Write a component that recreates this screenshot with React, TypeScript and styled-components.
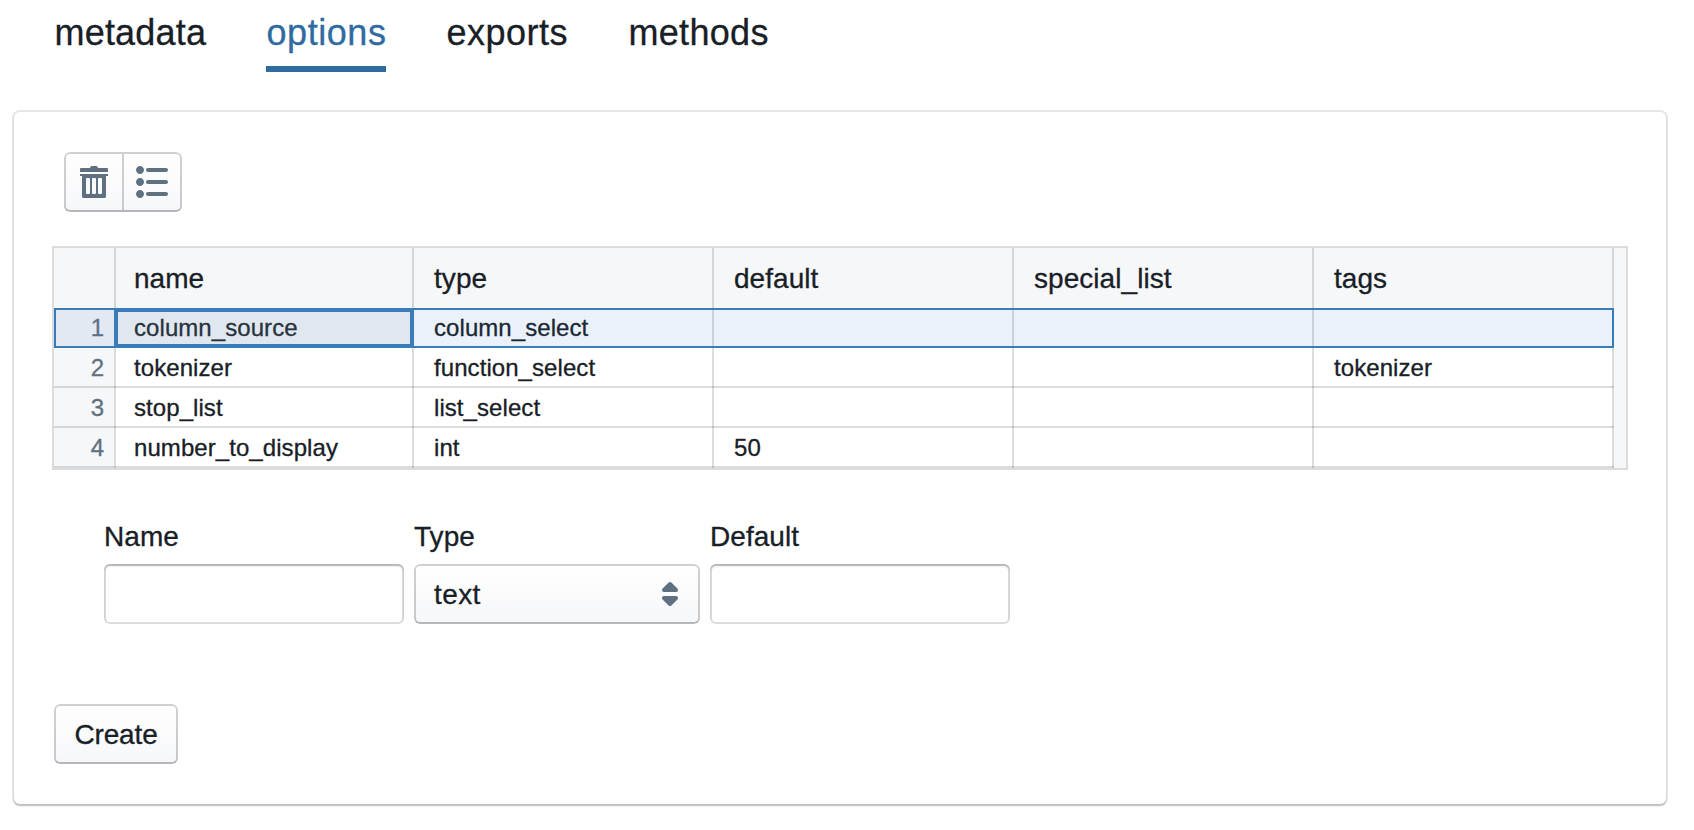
import React from "react";
import styled, { createGlobalStyle, css } from "styled-components";

const line = "rgba(16, 22, 26, 0.15)";
const ink = "#182026";
const muted = "#5f7081";
const blue = "#3a7cba";
const shade = "#f6f7f9";

const GlobalStyle = createGlobalStyle`
  *, *::before, *::after { box-sizing: border-box; }
  body {
    margin: 0;
    background: #fff;
    color: ${ink};
    font-family: "Liberation Sans", Arial, sans-serif;
    font-size: 28px;
    -webkit-text-stroke: 0.3px currentColor;
    overflow: hidden;
  }
`;

const Page = styled.main`
  padding: 0 28px 26px 14px;
  height: 830px;
`;

const TabList = styled.nav`
  display: flex;
  gap: 60px;
  height: 72px;
  padding-left: 40px;
`;

const Tab = styled.a<{ $active?: boolean; $width: number; $spacing: number }>`
  width: ${(p) => p.$width}px;
  height: 72px;
  padding-left: 0.5px;
  line-height: 65px;
  font-size: 36px;
  letter-spacing: ${(p) => p.$spacing}px;
  white-space: nowrap;
  color: ${(p) => (p.$active ? "#2f6aa1" : ink)};
  box-shadow: ${(p) => (p.$active ? "inset 0 -6px 0 #2f6aa1" : "none")};
`;

const Card = styled.section`
  display: flex;
  flex-direction: column;
  align-items: flex-start;
  height: 692px;
  margin-top: 40px;
  padding: 40px 38px;
  border-radius: 6px;
  background: #fff;
  box-shadow: 0 0 0 2px rgba(16, 22, 26, 0.1), 0 2px 2px rgba(16, 22, 26, 0.2);
`;

const raised = css`
  border: 0;
  border-radius: 6px;
  background: ${shade} linear-gradient(to bottom, #fff, rgba(255, 255, 255, 0));
  box-shadow: inset 0 0 0 2px rgba(16, 22, 26, 0.2), inset 0 -2px 0 rgba(16, 22, 26, 0.1);
  color: ${ink};
  font-family: inherit;
  font-size: 28px;
`;

const ButtonGroup = styled.div`
  display: flex;
  margin-left: 12px;
`;

const IconButton = styled.button`
  ${raised}
  display: flex;
  align-items: center;
  justify-content: center;
  width: 60px;
  height: 60px;
  padding: 0;
  color: ${muted};
  &:first-child { border-radius: 6px 0 0 6px; }
  &:last-child { border-radius: 0 6px 6px 0; margin-left: -2px; }
`;

const Table = styled.div`
  position: relative;
  width: 1576px;
  height: 224px;
  margin-top: 34px;
  border: 2px solid #dbdcdd;
  background: ${shade};
`;

const TableRow = styled.div`
  display: grid;
  grid-template-columns: 60px repeat(5, 300px);
`;

const Corner = styled.div`
  height: 60px;
`;

const HeaderCell = styled.div`
  height: 60px;
  padding-left: 20px;
  line-height: 61px;
  letter-spacing: 0.05px;
  box-shadow: inset -2px 0 0 ${line};
  ${Corner} + & { box-shadow: inset -2px 0 0 ${line}, inset 2px 0 0 ${line}; }
`;

const RowNumber = styled.div`
  height: 40px;
  padding-right: 10px;
  line-height: 40px;
  font-size: 24px;
  text-align: right;
  color: ${muted};
  box-shadow: inset 0 -2px 0 ${line};
`;

const Cell = styled.div`
  height: 40px;
  padding-left: 20px;
  line-height: 40px;
  font-size: 24px;
  white-space: nowrap;
  letter-spacing: 0.07px;
  background: #fff;
  box-shadow: inset 0 -2px 0 ${line}, inset -2px 0 0 ${line};
  ${RowNumber} + & { box-shadow: inset 0 -2px 0 ${line}, inset -2px 0 0 ${line}, inset 2px 0 0 ${line}; }
`;

const RowSelection = styled.div`
  position: absolute;
  left: 0;
  top: 60px;
  width: 1560px;
  height: 40px;
  border: 2px solid ${blue};
  background: rgba(45, 114, 190, 0.1);
`;

const FocusedCell = styled.div`
  position: absolute;
  left: 60px;
  top: 60px;
  width: 300px;
  height: 40px;
  border: 4px solid ${blue};
  background: rgba(138, 145, 158, 0.1);
`;

const Form = styled.form`
  display: flex;
  gap: 10px;
  margin: 46px 0 0 52px;
`;

const Field = styled.label<{ $width: number }>`
  display: flex;
  flex-direction: column;
  width: ${(p) => p.$width}px;
  line-height: 42px;
  letter-spacing: 0.05px;
`;

const TextInput = styled.input`
  width: 100%;
  height: 60px;
  margin-top: 6px;
  padding: 0 20px;
  border: 0;
  border-radius: 6px;
  background: #fff;
  font: inherit;
  box-shadow: inset 0 0 0 2px rgba(16, 22, 26, 0.15), inset 0 2px 2px rgba(16, 22, 26, 0.2);
`;

const SelectBox = styled.div`
  ${raised}
  display: flex;
  align-items: center;
  justify-content: space-between;
  height: 60px;
  margin-top: 6px;
  padding: 0 14px 0 20px;
  letter-spacing: 0.4px;
  svg { color: ${muted}; }
`;

const SelectValue = styled.span`
  padding-top: 2px;
`;

const CreateButton = styled.button`
  ${raised}
  width: 124px;
  height: 60px;
  margin: 80px 0 0 2px;
  padding: 2px 0 0;
  letter-spacing: -0.15px;
`;

function Icon({ d }: { d: string }) {
  return (
    <svg width="32" height="32" viewBox="0 0 16 16" fill="currentColor" fillRule="evenodd">
      <path d={d} />
    </svg>
  );
}

const trash =
  "M1 3V1.5Q1 1 1.5 1H6Q6 0 7 0H9Q10 0 10 1H14.5Q15 1 15 1.5V3ZM1 4H15V5H14V15.2Q14 16 13.2 16H2.8Q2 16 2 15.2V5H1ZM4 6.5V13.5Q4 14 4.5 14H5.5Q6 14 6 13.5V6.5Q6 6 5.5 6H4.5Q4 6 4 6.5ZM7 6.5V13.5Q7 14 7.5 14H8.5Q9 14 9 13.5V6.5Q9 6 8.5 6H7.5Q7 6 7 6.5ZM10 6.5V13.5Q10 14 10.5 14H11.5Q12 14 12 13.5V6.5Q12 6 11.5 6H10.5Q10 6 10 6.5Z";
const properties =
  "M2 6C.9 6 0 6.9 0 8s.9 2 2 2 2-.9 2-2-.9-2-2-2zm4-3h9c.55 0 1-.45 1-1s-.45-1-1-1H6c-.55 0-1 .45-1 1s.45 1 1 1zm-4 9c-1.1 0-2 .9-2 2s.9 2 2 2 2-.9 2-2-.9-2-2-2zm13 1H6c-.55 0-1 .45-1 1s.45 1 1 1h9c.55 0 1-.45 1-1s-.45-1-1-1zm0-6H6c-.55 0-1 .45-1 1s.45 1 1 1h9c.55 0 1-.45 1-1s-.45-1-1-1zM2 0C.9 0 0 .9 0 2s.9 2 2 2 2-.9 2-2-.9-2-2-2z";
const doubleCaret =
  "M5 7h6a1.003 1.003 0 00.71-1.71l-3-3C8.53 2.11 8.28 2 8 2s-.53.11-.71.29l-3 3A1.003 1.003 0 005 7zm6 2H5a1.003 1.003 0 00-.71 1.71l3 3c.18.18.43.29.71.29s.53-.11.71-.29l3-3A1.003 1.003 0 0011 9z";

const tabs = [
  { label: "metadata", width: 152, spacing: 0.2 },
  { label: "options", width: 120, spacing: 0.55, active: true },
  { label: "exports", width: 122, spacing: 0.5 },
  { label: "methods", width: 142, spacing: 0.3 },
];

const columns = ["name", "type", "default", "special_list", "tags"];

const rows = [
  ["column_source", "column_select", "", "", ""],
  ["tokenizer", "function_select", "", "", "tokenizer"],
  ["stop_list", "list_select", "", "", ""],
  ["number_to_display", "int", "50", "", ""],
];

export default function App() {
  return (
    <>
      <GlobalStyle />
      <Page>
        <TabList>
          {tabs.map((t) => (
            <Tab key={t.label} $active={t.active} $width={t.width} $spacing={t.spacing}>
              {t.label}
            </Tab>
          ))}
        </TabList>
        <Card>
          <ButtonGroup>
            <IconButton type="button" aria-label="Delete">
              <Icon d={trash} />
            </IconButton>
            <IconButton type="button" aria-label="Properties">
              <Icon d={properties} />
            </IconButton>
          </ButtonGroup>
          <Table>
            <TableRow>
              <Corner />
              {columns.map((c) => (
                <HeaderCell key={c}>{c}</HeaderCell>
              ))}
            </TableRow>
            {rows.map((cells, i) => (
              <TableRow key={cells[0]}>
                <RowNumber>{i + 1}</RowNumber>
                {cells.map((value, j) => (
                  <Cell key={j}>{value}</Cell>
                ))}
              </TableRow>
            ))}
            <RowSelection />
            <FocusedCell />
          </Table>
          <Form>
            <Field $width={300}>
              Name
              <TextInput />
            </Field>
            <Field as="div" $width={286}>
              Type
              <SelectBox>
                <SelectValue>text</SelectValue>
                <Icon d={doubleCaret} />
              </SelectBox>
            </Field>
            <Field $width={300}>
              Default
              <TextInput />
            </Field>
          </Form>
          <CreateButton type="button">Create</CreateButton>
        </Card>
      </Page>
    </>
  );
}
